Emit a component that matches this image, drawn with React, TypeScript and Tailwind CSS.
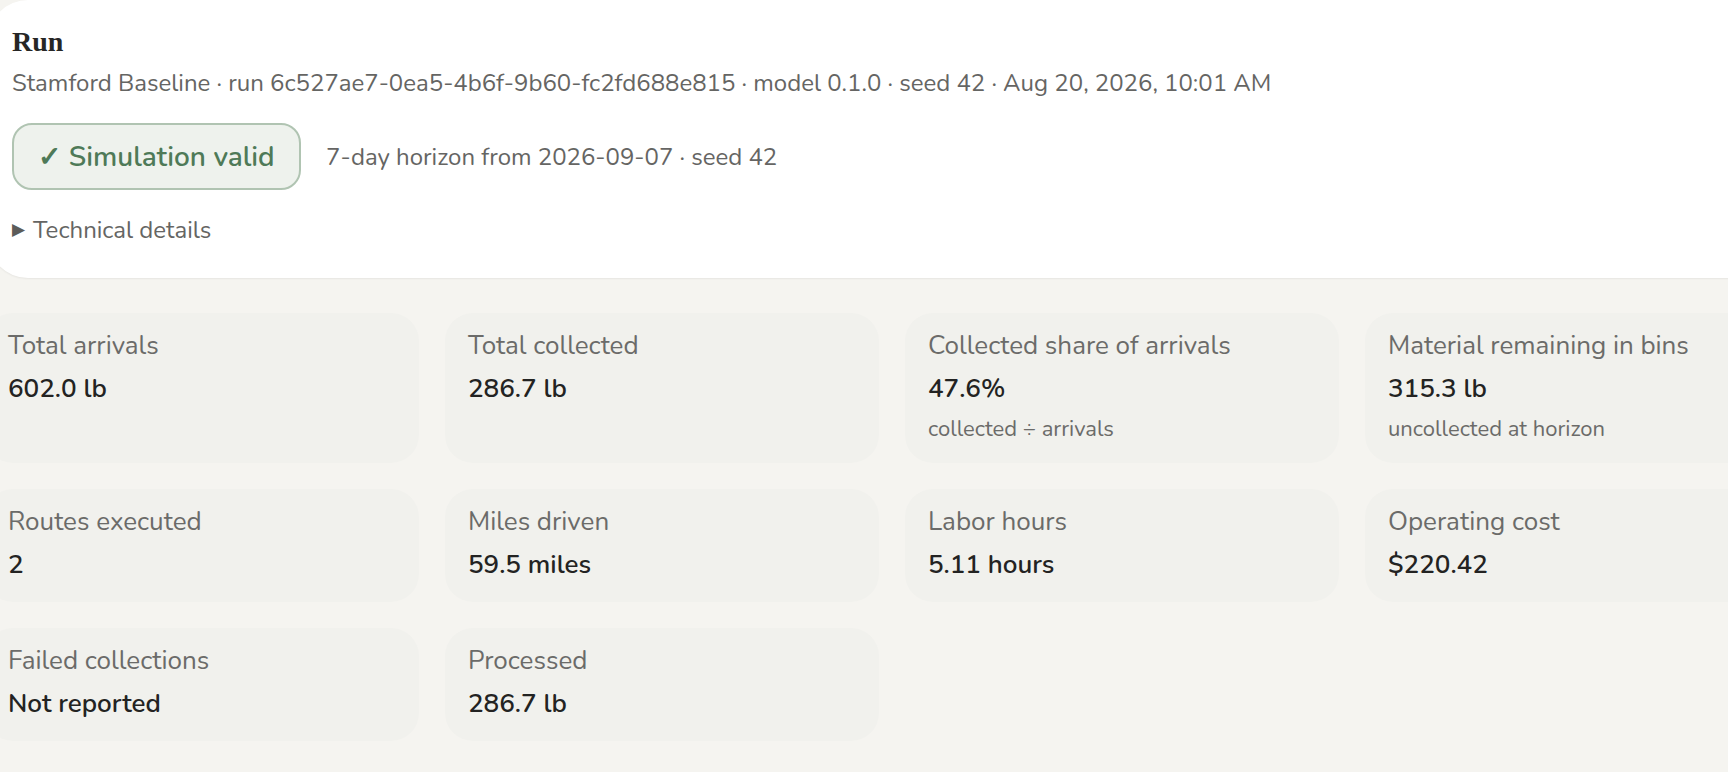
import React from "react";

interface Stat {
    label: string;
    value: string;
    note?: string;
}

const stats: Stat[] = [
    { label: "Total arrivals", value: "602.0 lb" },
    { label: "Total collected", value: "286.7 lb" },
    { label: "Collected share of arrivals", value: "47.6%", note: "collected ÷ arrivals" },
    { label: "Material remaining in bins", value: "315.3 lb", note: "uncollected at horizon" },
    { label: "Routes executed", value: "2" },
    { label: "Miles driven", value: "59.5 miles" },
    { label: "Labor hours", value: "5.11 hours" },
    { label: "Operating cost", value: "$220.42" },
    { label: "Failed collections", value: "Not reported" },
    { label: "Processed", value: "286.7 lb" }
];

const sans = "font-['Nunito','Open_Sans','Noto_Sans',sans-serif]";

function StatCard({ stat }: { stat: Stat }) {
    return (
        <div className="rounded-[28px] bg-[#f1f1ed] px-[23px] pt-[18px] pb-[22px]">
            <div className="text-[26px] leading-[30px] text-[#6b6b69]">{stat.label}</div>
            <div className="mt-[13px] text-[26px] leading-[30px] font-semibold text-[#232322]">{stat.value}</div>
            {stat.note && (
                <div className="mt-[13px] text-[22px] leading-[24px] text-[#6b6b69]">{stat.note}</div>
            )}
        </div>
    );
}

export default function App() {
    return (
        <div className={`min-h-screen w-full overflow-hidden bg-[#f5f4f0] ${sans}`}>
            {/* Run summary */}
            <section className="-ml-[12px] w-[1790px] rounded-l-[40px] bg-white pl-[24px] pt-[24px] pb-[33px] shadow-[0_1px_2px_rgba(0,0,0,0.06)]">
                <h1 className="font-['Liberation_Serif',serif] text-[28px] leading-[35px] font-bold text-[#262625]">Run</h1>
                <p className="mt-[9px] text-[24px] leading-[30px] text-[#656563]">
                    Stamford Baseline · run 6c527ae7-0ea5-4b6f-9b60-fc2fd688e815 · model 0.1.0 · seed 42 · Aug 20, 2026, 10:01 AM
                </p>
                <div className="mt-[25px] flex items-center gap-[25px]">
                    <div className="flex h-[67px] w-[289px] items-center justify-center rounded-[20px] border-2 border-[#b0c4b2] bg-[#eef2ed] text-[28px] font-semibold text-[#4e7a58]">
                        ✓ Simulation valid
                    </div>
                    <span className="text-[24px] leading-[30px] text-[#656563]">7-day horizon from 2026-09-07 · seed 42</span>
                </div>
                <div className="mt-[25px] flex items-center gap-[8px] text-[24px] leading-[30px] text-[#656563]">
                    <span className="text-[17px] text-[#5c5c5a]">▶</span>
                    <span>Technical details</span>
                </div>
            </section>

            {/* Metrics */}
            <div className="-ml-[15px] mt-[35px] grid w-[1814px] grid-cols-[repeat(4,434px)] gap-[26px]">
                {stats.map((s) => (
                    <StatCard key={s.label} stat={s} />
                ))}
            </div>
        </div>
    );
}
